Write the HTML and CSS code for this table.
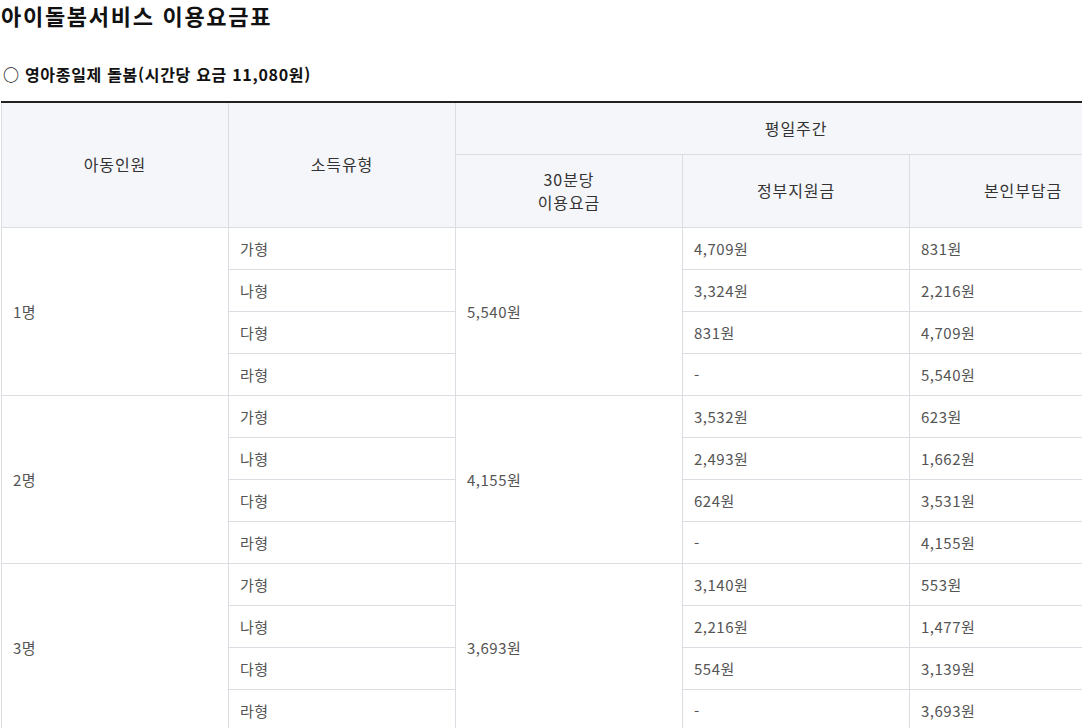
FILE: index.html
```html
<!DOCTYPE html>
<html lang="ko">
<head>
<meta charset="utf-8">
<link rel="stylesheet" href="styles.css">
</head>
<body>
<div class="page">
  <h1 class="title">아이돌봄서비스 이용요금표</h1>
  <h2 class="subtitle">○ 영아종일제 돌봄(시간당 요금 11,080원)</h2>
  <table class="fee">
    <colgroup>
      <col class="c"><col class="c"><col class="c"><col class="c"><col class="c">
    </colgroup>
    <thead>
      <tr class="h1">
        <th rowspan="2">아동인원</th>
        <th rowspan="2">소득유형</th>
        <th colspan="3">평일주간</th>
      </tr>
      <tr class="h2">
        <th>30분당<br>이용요금</th>
        <th>정부지원금</th>
        <th>본인부담금</th>
      </tr>
    </thead>
    <tbody>
      <tr><td rowspan="4">1명</td><td>가형</td><td rowspan="4">5,540원</td><td>4,709원</td><td>831원</td></tr>
      <tr><td>나형</td><td>3,324원</td><td>2,216원</td></tr>
      <tr><td>다형</td><td>831원</td><td>4,709원</td></tr>
      <tr><td>라형</td><td>-</td><td>5,540원</td></tr>
      <tr><td rowspan="4">2명</td><td>가형</td><td rowspan="4">4,155원</td><td>3,532원</td><td>623원</td></tr>
      <tr><td>나형</td><td>2,493원</td><td>1,662원</td></tr>
      <tr><td>다형</td><td>624원</td><td>3,531원</td></tr>
      <tr><td>라형</td><td>-</td><td>4,155원</td></tr>
      <tr><td rowspan="4">3명</td><td>가형</td><td rowspan="4">3,693원</td><td>3,140원</td><td>553원</td></tr>
      <tr><td>나형</td><td>2,216원</td><td>1,477원</td></tr>
      <tr><td>다형</td><td>554원</td><td>3,139원</td></tr>
      <tr><td>라형</td><td>-</td><td>3,693원</td></tr>
    </tbody>
  </table>
</div>
</body>
</html>
```

FILE: styles.css
```css
html, body {
  margin: 0;
  padding: 0;
  background: #fff;
  overflow: hidden;
}
body {
  font-family: "Noto Sans CJK KR", "Noto Sans", sans-serif;
  color: #222;
}
.page {
  padding: 0 0 0 1px;
  width: 1140px;
}
.title {
  margin: 0;
  font-size: 22px;
  line-height: 30px;
  font-weight: 700;
  letter-spacing: 1.7px;
  color: #111;
}
.subtitle {
  margin: 31px 0 0 2px;
  font-size: 16px;
  line-height: 26px;
  font-weight: 700;
  letter-spacing: 0.7px;
  color: #111;
}
.fee {
  margin-top: 14px;
  border-collapse: collapse;
  table-layout: fixed;
  width: 1135px;
  border-top: 2px solid #222;
}
.fee col.c {
  width: 227px;
}
.fee th,
.fee td {
  border: 1px solid #dcdde2;
  line-height: 21px;
  padding: 0 11px;
}
.fee tr:first-child th { border-top: 0; }
.fee th {
  background: #f5f6fa;
  font-size: 16px;
  line-height: 23px;
  letter-spacing: 0.9px;
  font-weight: 400;
  color: #333;
  text-align: center;
  vertical-align: middle;
}
.fee tr.h1 { height: 52px; }
.fee tr.h2 { height: 73px; }
.fee td {
  font-size: 15px;
  letter-spacing: 0.5px;
  color: #555;
  text-align: left;
  vertical-align: middle;
  height: 41px;
}
```
